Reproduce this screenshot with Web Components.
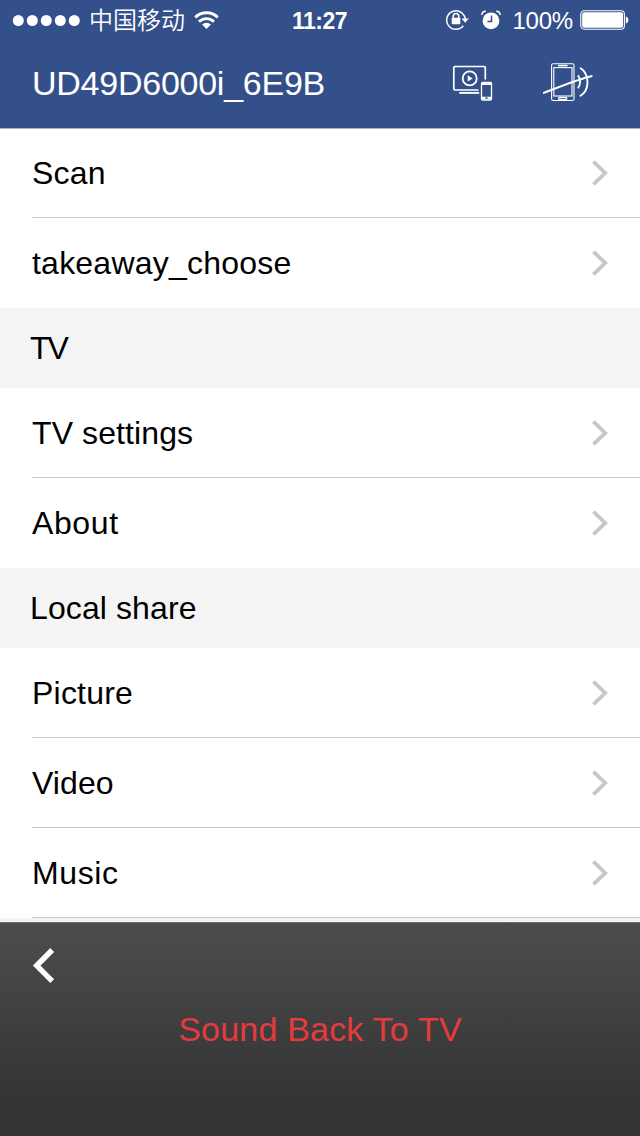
<!DOCTYPE html>
<html lang="en">
<head>
<meta charset="utf-8">
<title>UD49D6000i_6E9B</title>
<style>
  body {
    margin: 0;
    background: #f4f4f4;
    font-family: "Liberation Sans", "Noto Sans CJK SC", sans-serif;
  }
</style>
</head>
<body>
<remote-app></remote-app>

<script>
/* Shared base: opens a shadow root and fills it from the class's html() */
class BaseElement extends HTMLElement {
  connectedCallback() {
    if (this.shadowRoot) return;
    this.attachShadow({ mode: 'open' });
    this.shadowRoot.innerHTML = this.html();
  }
}

class StatusBar extends BaseElement {
  html() {
    return `
      <style>
        :host {
          display: grid;
          grid-template-columns: 1fr auto 1fr;
          align-items: center;
          height: 40px;
          padding: 0 11px 0 12px;
          color: #fff;
          font-size: 23px;
          line-height: 42px;
        }
        .left, .right { display: flex; align-items: center; height: 40px; }
        .right { justify-content: flex-end; }
        svg { display: block; flex: none; }
        .dots { margin-bottom: 1px; }
        .carrier {
          height: 40px;
          margin: 0 9px 0 8px;
          font-family: "Noto Sans CJK SC", sans-serif;
          font-weight: 350;
          font-size: 24px;
          line-height: 38px;
        }
        .wifi { margin-bottom: 1px; }
        .time { height: 40px; font-weight: bold; letter-spacing: -0.5px; margin-right: 2px; }
        .lock { margin: 0 12px 0 0; }
        .alarm { margin: 0 11px 1px 0; }
        .percent { height: 40px; margin-right: 7px; font-size: 24px; letter-spacing: -0.2px; }
      </style>
      <div class="left">
        <svg class="dots" width="69" height="12" viewBox="0 0 69 12" fill="#fff">
          <circle cx="6.3" cy="6.5" r="5.5"/><circle cx="20.3" cy="6.5" r="5.5"/>
          <circle cx="34.3" cy="6.5" r="5.5"/><circle cx="48.3" cy="6.5" r="5.5"/>
          <circle cx="62.3" cy="6.5" r="5.5"/>
        </svg>
        <span class="carrier">中国移动</span>
        <svg class="wifi" width="25" height="18" viewBox="0 0 25 18" fill="none" stroke="#fff" stroke-width="2.9">
          <path d="M1.2 6.4a16 16 0 0 1 22.6 0"/>
          <path d="M5 10.7a10.6 10.6 0 0 1 15 0"/>
          <path d="M12.5 18 8.1 13.6a6 6 0 0 1 8.8 0z" fill="#fff" stroke="none"/>
        </svg>
      </div>
      <span class="time">11:27</span>
      <div class="right">
        <svg class="lock" width="24" height="22" viewBox="0 0 24 22" fill="none" stroke="#fff" stroke-width="1.5">
          <path d="M18.3 16.8A9.3 9.3 0 1 1 20.3 11"/>
          <path d="M16.6 9.6h7.2l-3.6 4.2z" fill="#fff" stroke="none"/>
          <path d="M8.2 9V7.4a2.8 2.8 0 0 1 5.6 0V9"/>
          <rect x="6.7" y="8.8" width="8.6" height="6.4" rx="0.8" fill="#fff" stroke="none"/>
        </svg>
        <svg class="alarm" width="20" height="20" viewBox="0 0 20 20">
          <circle cx="10" cy="10.8" r="8.4" fill="#fff"/>
          <path d="M10.5 5.5v6h-4" fill="none" stroke="#34508a" stroke-width="1.5"/>
          <path d="M0.8 5C1 3 2.6 1.2 4.8 1.2M19.2 5C19 3 17.4 1.2 15.2 1.2" fill="none" stroke="#fff" stroke-width="1.5"/>
        </svg>
        <span class="percent">100%</span>
        <svg width="49" height="20" viewBox="0 0 49 20">
          <rect x="0.8" y="0.8" width="43.6" height="18.4" rx="3.4" fill="none" stroke="#fff" stroke-width="1.1"/>
          <rect x="2.2" y="2.2" width="40.8" height="15.6" rx="2" fill="#fff"/>
          <path d="M45.8 6.4c3.4.8 3.4 6.4 0 7.2z" fill="#fff"/>
        </svg>
      </div>
    `;
  }
}

class NavHeader extends BaseElement {
  html() {
    return `
      <style>
        :host {
          display: flex;
          align-items: center;
          height: 88px;
          box-sizing: border-box;
          padding: 0 47px 0 32px;
          color: #fff;
        }
        h1 {
          flex: 1;
          height: 88px;
          margin: 0;
          font-size: 34px;
          font-weight: normal;
          line-height: 86px;
          letter-spacing: -0.25px;
        }
        svg { display: block; flex: none; margin-bottom: 4px; }
        .cast { margin-right: 50px; }
      </style>
      <h1><slot></slot></h1>
      <svg class="cast" width="41" height="42" viewBox="0 0 41 42" fill="none" stroke="#fff">
        <path d="M26.5 29H3a1.2 1.2 0 0 1-1.2-1.2V6.7A1.2 1.2 0 0 1 3 5.5h29.1a1.2 1.2 0 0 1 1.2 1.2V18.4" stroke-width="1.7"/>
        <path d="M7.2 31.9h20" stroke-width="1.9"/>
        <circle cx="17.7" cy="17.4" r="7" stroke-width="1.8"/>
        <path d="M15.7 14.2v6.4l5-3.2z" fill="#fff" stroke="none"/>
        <rect x="29.5" y="21.4" width="10" height="17.6" rx="1.2" stroke-width="1.3"/>
        <path d="M29.5 22.8h10M29.5 37h10" stroke-width="2.4"/>
        <rect x="33.5" y="36.2" width="2" height="1.6" fill="#34508a" stroke="none"/>
      </svg>
      <svg width="50" height="42" viewBox="0 0 50 42" fill="none" stroke="#fff">
        <rect x="8.6" y="2.7" width="22.4" height="36.8" rx="1.5" stroke-width="1.1"/>
        <rect x="10.8" y="6.6" width="18.2" height="28.4" stroke-width="1.1"/>
        <path d="M15 4.6h9.5" stroke-width="1.6"/>
        <rect x="15.6" y="36.3" width="8.2" height="2" rx="0.9" stroke-width="1.2"/>
        <path d="M0 32.2C12 27.6 36 17.8 49.4 15" stroke-width="1.9"/>
        <path d="M35 14.4C37.8 18 37.8 23.4 35 27.2" stroke-width="1.9"/>
        <path d="M37 6.7C46.6 12.7 47.4 29.2 36.8 35.3" stroke-width="1.9"/>
      </svg>
    `;
  }
}

class SectionTitle extends BaseElement {
  html() {
    return `
      <style>
        :host {
          display: block;
          height: 80px;
          padding-left: 30px;
          background: #f4f4f4;
          color: #000;
          font-size: 32px;
          line-height: 80px;
          letter-spacing: var(--tracking, 0.1px);
        }
      </style>
      <slot></slot>
    `;
  }
}

class MenuRow extends BaseElement {
  html() {
    return `
      <style>
        :host { display: block; height: 90px; padding-left: 32px; background: #fff; color: #000; }
        .row {
          display: flex;
          align-items: center;
          justify-content: space-between;
          box-sizing: border-box;
          height: 90px;
          padding-right: 31px;
          border-bottom: 1px solid #c8c8c8;
        }
        :host([last]) .row { border-bottom-color: transparent; }
        .label { font-size: 32px; line-height: 89px; letter-spacing: var(--tracking, 0.22px); padding-top: 1px; }
        svg { display: block; }
      </style>
      <div class="row">
        <span class="label"><slot></slot></span>
        <svg width="18" height="28" viewBox="0 0 18 28" fill="none" stroke="#c7c7c7" stroke-width="3.8">
          <path d="M2.4 2.6 14.2 14 2.4 25.4"/>
        </svg>
      </div>
    `;
  }
}

class BottomPanel extends BaseElement {
  html() {
    return `
      <style>
        :host {
          display: flex;
          flex-direction: column;
          box-sizing: border-box;
          height: 214px;
          background: linear-gradient(#4d4d4d, #333 86%);
          border-top: 1px solid #6a6a6a;
        }
        .back { display: block; margin: 24px 0 0 32px; }
        .action {
          margin-top: 22px;
          color: #e53a3e;
          font-size: 34px;
          line-height: 44px;
          letter-spacing: 0.2px;
          text-align: center;
        }
      </style>
      <svg class="back" width="24" height="38" viewBox="0 0 24 38" fill="none" stroke="#fff" stroke-width="5.4">
        <path d="M20.2 3 4.7 18.6 20.2 34.2"/>
      </svg>
      <div class="action"><slot></slot></div>
    `;
  }
}

class RemoteApp extends BaseElement {
  html() {
    return `
      <style>
        :host { display: flex; flex-direction: column; height: 1136px; overflow: hidden; background: #f4f4f4; }
        header { flex: none; height: 128px; background: #34508a; }
        main { flex: 1; min-height: 0; }
        bottom-panel { flex: none; }
        .first { box-shadow: inset 0 1px #b2b2b2; }
        .tight { --tracking: -2px; }
        .snug { --tracking: 0.1px; }
        .wide { --tracking: 0.6px; }
      </style>
      <header>
        <status-bar></status-bar>
        <nav-header>UD49D6000i_6E9B</nav-header>
      </header>
      <main>
        <menu-row class="first">Scan</menu-row>
        <menu-row last>takeaway_choose</menu-row>
        <section-title class="tight">TV</section-title>
        <menu-row class="snug">TV settings</menu-row>
        <menu-row class="wide" last>About</menu-row>
        <section-title>Local share</section-title>
        <menu-row>Picture</menu-row>
        <menu-row class="snug">Video</menu-row>
        <menu-row class="wide">Music</menu-row>
      </main>
      <bottom-panel>Sound Back To TV</bottom-panel>
    `;
  }
}

customElements.define('status-bar', StatusBar);
customElements.define('nav-header', NavHeader);
customElements.define('section-title', SectionTitle);
customElements.define('menu-row', MenuRow);
customElements.define('bottom-panel', BottomPanel);
customElements.define('remote-app', RemoteApp);
</script>
</body>
</html>
